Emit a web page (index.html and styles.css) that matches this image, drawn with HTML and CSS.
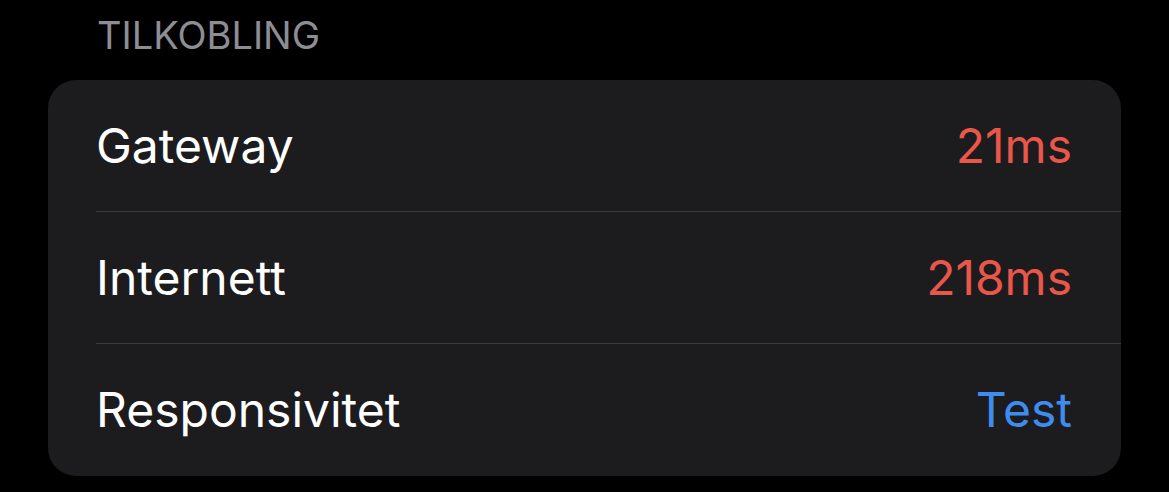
FILE: index.html
```html
<!DOCTYPE html>
<html lang="no">
<head>
<meta charset="utf-8">
<link rel="stylesheet" href="styles.css">
</head>
<body>
  <div class="section-header">TILKOBLING</div>
  <div class="card">
    <div class="row">
      <div class="row-inner">
        <span class="label">Gateway</span>
        <span class="value value-red">21ms</span>
      </div>
    </div>
    <div class="row">
      <div class="row-inner">
        <span class="label">Internett</span>
        <span class="value value-red">218ms</span>
      </div>
    </div>
    <div class="row row-last">
      <div class="row-inner">
        <span class="label">Responsivitet</span>
        <span class="value value-blue">Test</span>
      </div>
    </div>
  </div>
</body>
</html>
```

FILE: styles.css
```css
html, body {
  margin: 0;
  padding: 0;
  background: #000;
}

body {
  font-family: Inter, "Noto Sans", sans-serif;
  width: 1169px;
  height: 492px;
  overflow: hidden;
}

.section-header {
  color: #8d8d93;
  font-size: 38px;
  line-height: 46px;
  padding: 12px 0 22px 97px;
  letter-spacing: 0;
}

.card {
  margin-left: 48px;
  width: 1073px;
  background: #1c1c1e;
  border-radius: 28px;
  overflow: hidden;
}

.row {
  padding-left: 48px;
  height: 132px;
}

.row-inner {
  height: 131px;
  display: flex;
  align-items: center;
  justify-content: space-between;
  padding-right: 49px;
  border-bottom: 1px solid #3a3a3c;
}

.row-last .row-inner {
  border-bottom: none;
}

.label {
  color: #ffffff;
  font-size: 48px;
  letter-spacing: 0;
}

.value {
  font-size: 48px;
  letter-spacing: 0;
}

.value-red {
  color: #e9574a;
}

.value-blue {
  color: #3f8cf0;
}
```
